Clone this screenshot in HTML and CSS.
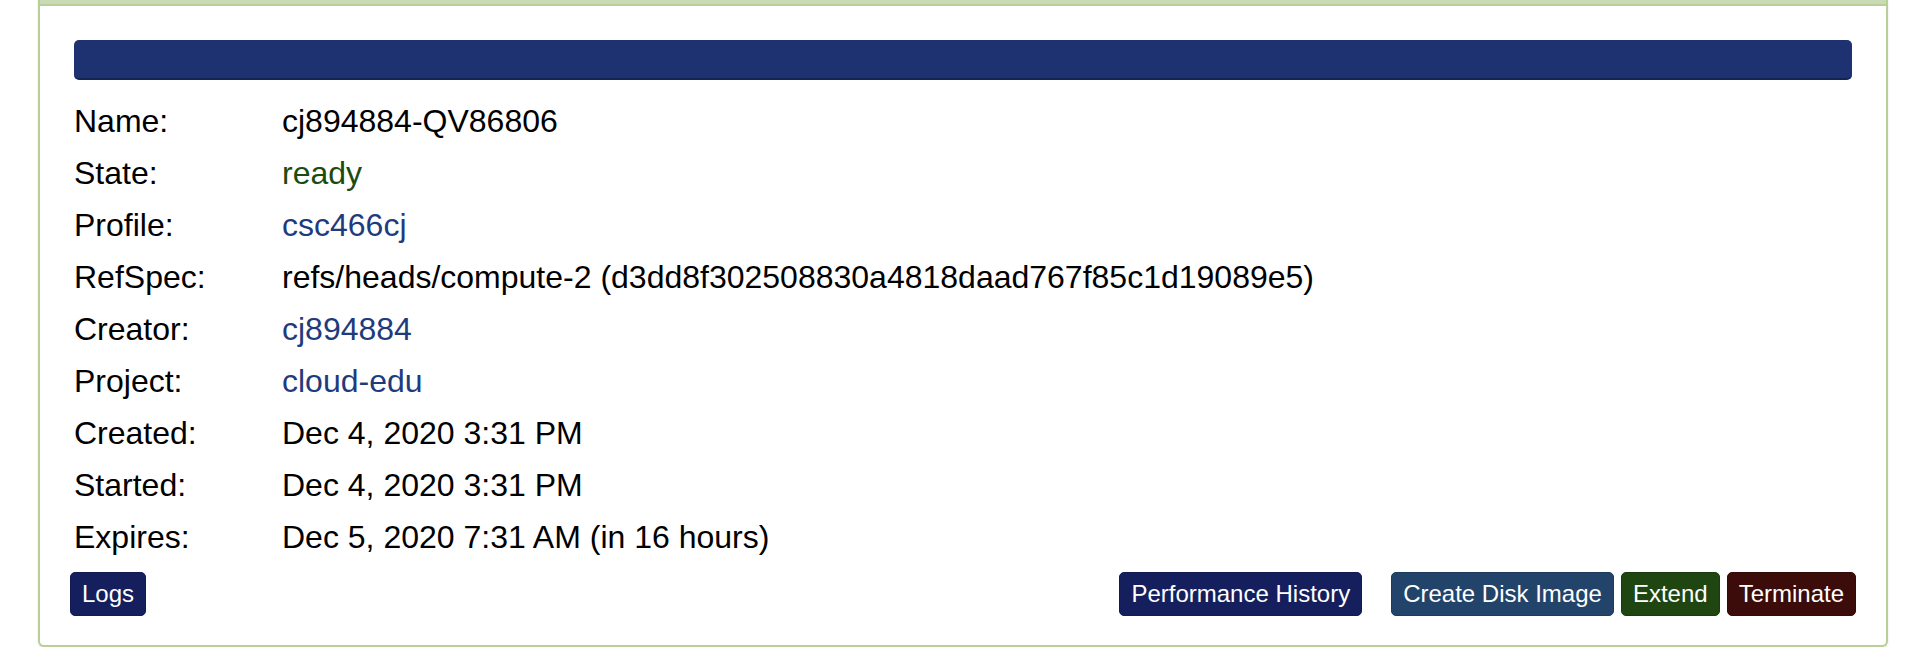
FILE: index.html
```html
<!DOCTYPE html>
<html lang="en">
<head>
<meta charset="utf-8">
<title>Experiment</title>
<link rel="stylesheet" href="styles.css">
</head>
<body>
<div class="panel">
  <div class="panel-heading"></div>
  <div class="panel-body">
    <div class="title-bar"></div>
    <table class="details">
      <tbody>
        <tr><td class="label">Name:</td><td>cj894884-QV86806</td></tr>
        <tr><td class="label">State:</td><td class="state-ready">ready</td></tr>
        <tr><td class="label">Profile:</td><td><a class="link" href="#">csc466cj</a></td></tr>
        <tr><td class="label">RefSpec:</td><td>refs/heads/compute-2 (d3dd8f302508830a4818daad767f85c1d19089e5)</td></tr>
        <tr><td class="label">Creator:</td><td><a class="link" href="#">cj894884</a></td></tr>
        <tr><td class="label">Project:</td><td><a class="link" href="#">cloud-edu</a></td></tr>
        <tr><td class="label">Created:</td><td>Dec 4, 2020 3:31 PM</td></tr>
        <tr><td class="label">Started:</td><td>Dec 4, 2020 3:31 PM</td></tr>
        <tr><td class="label">Expires:</td><td>Dec 5, 2020 7:31 AM (in 16 hours)</td></tr>
      </tbody>
    </table>
    <div class="actions">
      <button class="btn btn-navy">Logs</button>
      <div class="actions-right">
        <button class="btn btn-navy btn-spaced">Performance History</button>
        <button class="btn btn-steel">Create Disk Image</button>
        <button class="btn btn-green">Extend</button>
        <button class="btn btn-maroon">Terminate</button>
      </div>
    </div>
  </div>
</div>
</body>
</html>
```
FILE: styles.css
```css
html, body {
  margin: 0;
  padding: 0;
  background: #ffffff;
}

body {
  font-family: "Liberation Sans", Arial, Helvetica, sans-serif;
  color: #000000;
}

.panel {
  margin: 0 42px 0 38px;
  border: 2px solid #b8cf99;
  border-top: none;
  border-radius: 0 0 6px 6px;
  box-shadow: 0 1px 2px rgba(0, 0, 0, 0.12);
  background: #ffffff;
}

.panel-heading {
  height: 4px;
  background: #c9dab5;
  border-bottom: 2px solid #b8cf99;
}

.panel-body {
  padding: 34px 34px 29px 34px;
}

.title-bar {
  height: 38px;
  background: #1e3170;
  border-bottom: 2px solid #142454;
  border-radius: 5px;
}

.details {
  border-collapse: collapse;
  margin-top: 15px;
  font-size: 32px;
}

.details td {
  height: 52px;
  line-height: 52px;
  padding: 0;
  vertical-align: middle;
  white-space: nowrap;
}

.details td.label {
  width: 208px;
}

.state-ready {
  color: #1d4a0f;
}

.link {
  color: #1f3b7c;
  text-decoration: none;
}

.actions {
  display: flex;
  justify-content: space-between;
  align-items: center;
  margin: 9px -4px 0 -4px;
}

.actions-right {
  display: flex;
  gap: 7px;
}

.btn {
  font-family: "Liberation Sans", Arial, Helvetica, sans-serif;
  font-size: 24px;
  line-height: 42px;
  height: 44px;
  padding: 0 11px;
  border: 1px solid transparent;
  border-radius: 5px;
  color: #ffffff;
  cursor: pointer;
  white-space: nowrap;
}

.btn-navy {
  background: #151f5e;
  border-color: #121a52;
}

.btn-spaced {
  margin-right: 22px;
}

.btn-steel {
  background: #22446a;
  border-color: #1c3a5c;
}

.btn-green {
  background: #1f4511;
  border-color: #1a3b0e;
}

.btn-maroon {
  background: #3b0c0a;
  border-color: #320a08;
}
```
